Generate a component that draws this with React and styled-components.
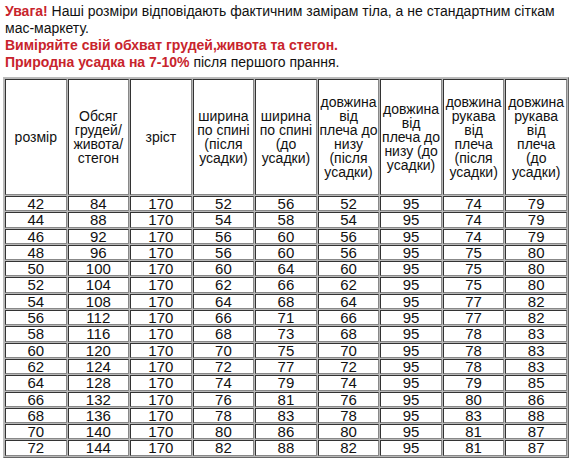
import React from "react";
import styled, { createGlobalStyle } from "styled-components";

const headers = [
  ["розмір"],
  ["Обсяг", "грудей/", "живота/", "стегон"],
  ["зріст"],
  ["ширина", "по спині", "(після", "усадки)"],
  ["ширина", "по спині", "(до", "усадки)"],
  ["довжина", "від", "плеча до", "низу", "(після", "усадки)"],
  ["довжина", "від", "плеча до", "низу (до", "усадки)"],
  ["довжина", "рукава", "від", "плеча", "(після", "усадки)"],
  ["довжина", "рукава", "від", "плеча", "(до", "усадки)"],
];

const rows = [
  [42, 84, 170, 52, 56, 52, 95, 74, 79],
  [44, 88, 170, 54, 58, 54, 95, 74, 79],
  [46, 92, 170, 56, 60, 56, 95, 74, 79],
  [48, 96, 170, 56, 60, 56, 95, 75, 80],
  [50, 100, 170, 60, 64, 60, 95, 75, 80],
  [52, 104, 170, 62, 66, 62, 95, 75, 80],
  [54, 108, 170, 64, 68, 64, 95, 77, 82],
  [56, 112, 170, 66, 71, 66, 95, 77, 82],
  [58, 116, 170, 68, 73, 68, 95, 78, 83],
  [60, 120, 170, 70, 75, 70, 95, 78, 83],
  [62, 124, 170, 72, 77, 72, 95, 78, 83],
  [64, 128, 170, 74, 79, 74, 95, 79, 85],
  [66, 132, 170, 76, 81, 76, 95, 80, 86],
  [68, 136, 170, 78, 83, 78, 95, 83, 88],
  [70, 140, 170, 80, 86, 80, 95, 81, 87],
  [72, 144, 170, 82, 88, 82, 95, 81, 87],
];

export default function App() {
  return (
    <>
      <GlobalStyle />
      <Page>
        <Notes>
          <p>
            <Red>Увага!</Red> Наші розміри відповідають фактичним замірам тіла,
            а не стандартним сіткам мас-маркету.
          </p>
          <p>
            <Red>Виміряйте свій обхват грудей,живота та стегон.</Red>
          </p>
          <p>
            <Red>Природна усадка на 7-10%</Red> після першого прання.
          </p>
        </Notes>
        <SizeTable>
          <thead>
            <tr>
              {headers.map((lines, i) => (
                <HeadCell key={i}>
                  {lines.map((l, j) => (
                    <React.Fragment key={j}>
                      {j > 0 && <br />}
                      {l}
                    </React.Fragment>
                  ))}
                </HeadCell>
              ))}
            </tr>
          </thead>
          <tbody>
            {rows.map((r) => (
              <tr key={r[0]}>
                {r.map((v, i) => (
                  <Cell key={i}>{v}</Cell>
                ))}
              </tr>
            ))}
          </tbody>
        </SizeTable>
      </Page>
    </>
  );
}

const GlobalStyle = createGlobalStyle`
  body {
    margin: 0;
    background: #fff;
    font-family: "Liberation Sans", Arial, sans-serif;
    color: #111;
  }
`;

const Page = styled.div`
  padding: 3px 1px 0 3px;
`;

const Notes = styled.div`
  padding-left: 2px;
  font-size: 14px;
  line-height: 17px;
  margin-bottom: 6px;
  p {
    margin: 0;
  }
`;

const Red = styled.b`
  color: #c8242c;
`;

const SizeTable = styled.table`
  width: 566px;
  table-layout: fixed;
  border-collapse: separate;
  border-spacing: 1px;
  border: 1px solid;
  border-color: #bbb #666 #666 #bbb;
  background: #b8b8b8;
  font-family: "Liberation Sans", Arial, sans-serif;
`;

const HeadCell = styled.th`
  height: 114px;
  padding: 0;
  font-weight: normal;
  font-size: 14px;
  line-height: 14px;
  text-align: center;
  vertical-align: middle;
  background: #fff;
  border: 1px solid;
  border-color: #333 #888 #888 #333;
`;

const Cell = styled.td`
  height: 13.3px;
  padding: 0;
  font-size: 15px;
  line-height: 13.3px;
  text-align: center;
  background: #fff;
  border: 1px solid;
  border-color: #333 #888 #888 #333;
`;
